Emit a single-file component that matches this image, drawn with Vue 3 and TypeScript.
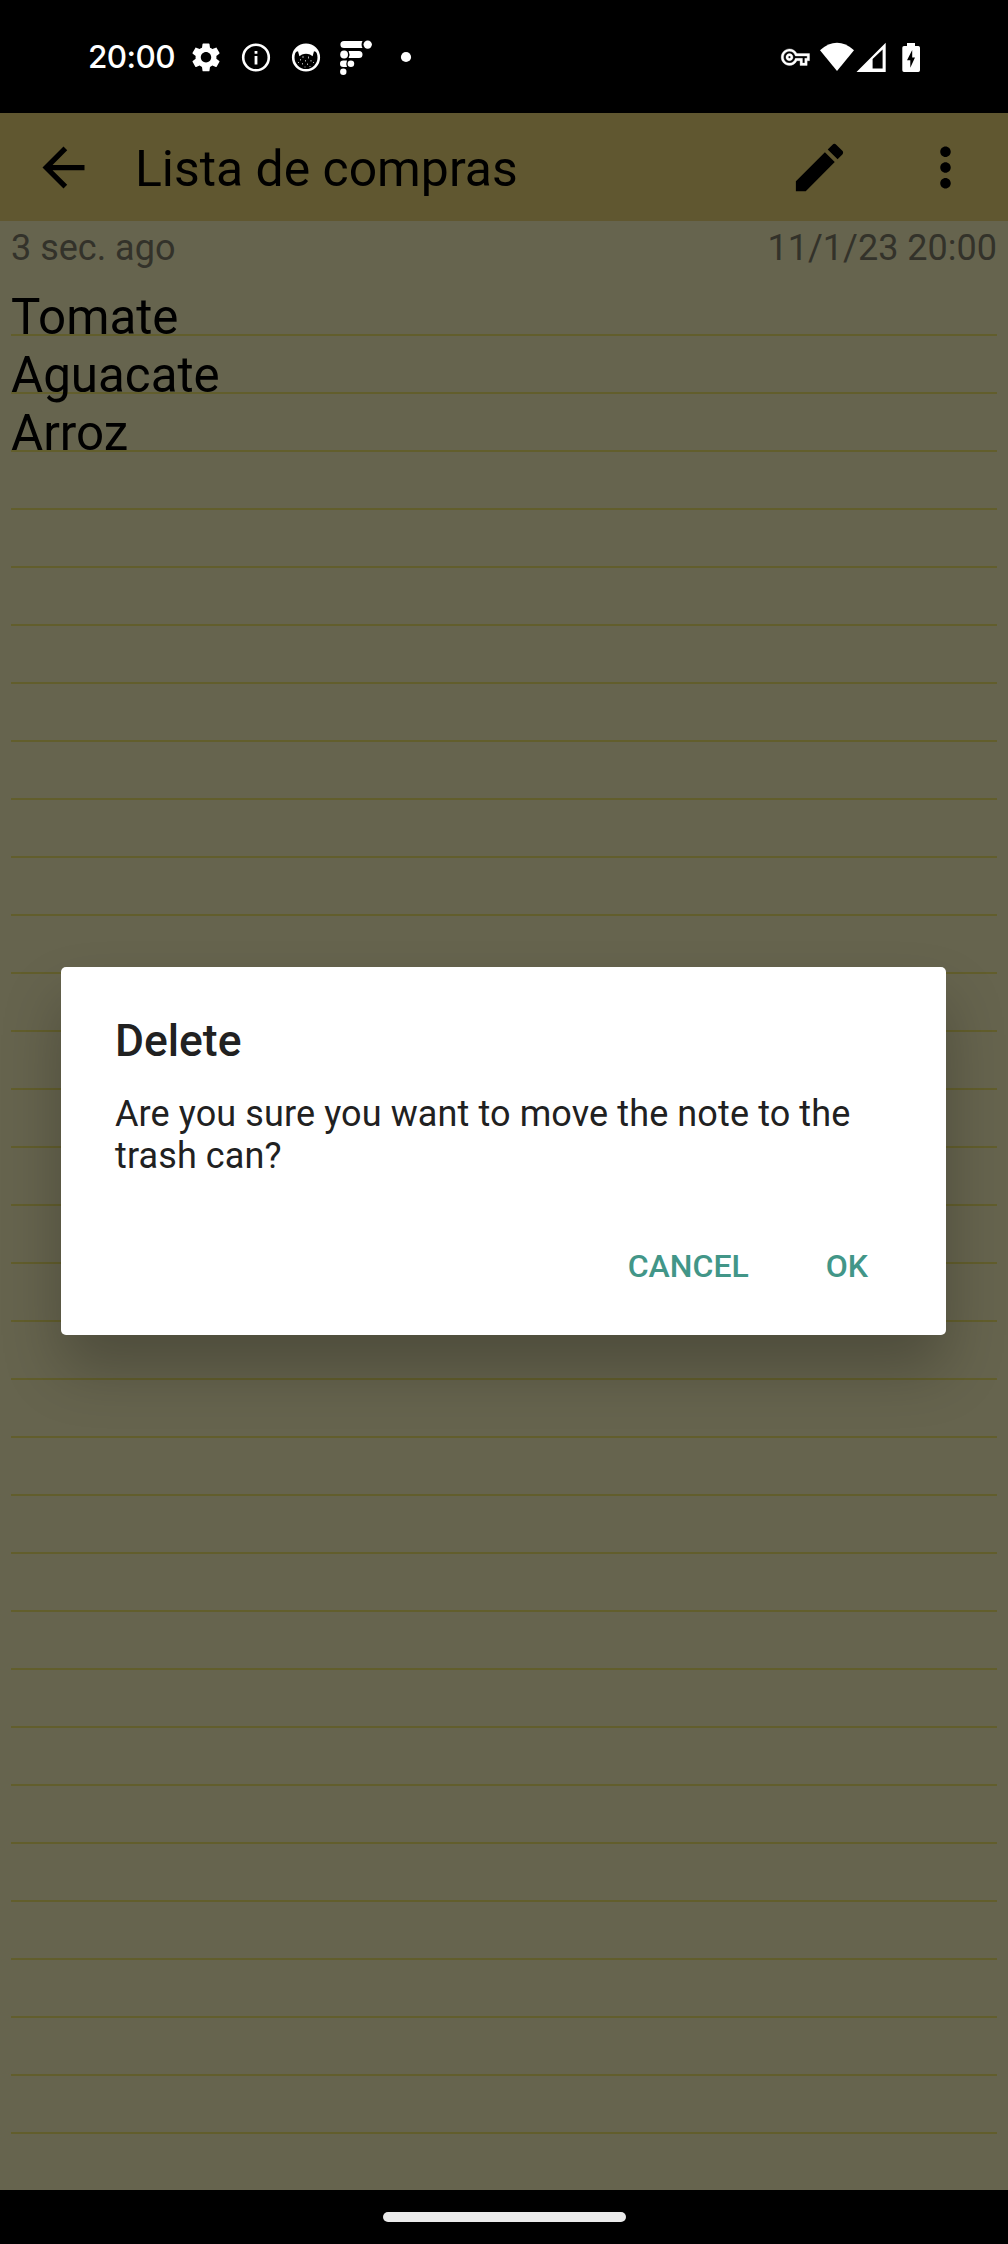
<script setup lang="ts">
const noteLines: string[] = ['Tomate', 'Aguacate', 'Arroz']
const ruleCount = 32
</script>

<template>
  <div class="screen">
    <header class="status">
      <span class="clock">20:00</span>
      <div class="notifications">
        <svg width="36" height="36" viewBox="0 0 36 36">
          <path transform="translate(.6 .9) scale(1.45)" fill="#fff" d="M19.14 12.94c.04-.3.06-.61.06-.94 0-.32-.02-.64-.07-.94l2.03-1.58c.18-.14.23-.41.12-.61l-1.92-3.32c-.12-.22-.37-.29-.59-.22l-2.39.96c-.5-.38-1.03-.7-1.62-.94l-.36-2.54c-.04-.24-.24-.41-.48-.41h-3.84c-.24 0-.43.17-.47.41l-.36 2.54c-.59.24-1.13.57-1.62.94l-2.39-.96c-.22-.08-.47 0-.59.22L2.74 8.87c-.12.21-.08.47.12.61l2.03 1.58c-.05.3-.09.63-.09.94s.02.64.07.94l-2.03 1.58c-.18.14-.23.41-.12.61l1.92 3.32c.12.22.37.29.59.22l2.39-.96c.5.38 1.03.7 1.62.94l.36 2.54c.05.24.24.41.48.41h3.84c.24 0 .44-.17.47-.41l.36-2.54c.59-.24 1.13-.56 1.62-.94l2.39.96c.22.08.47 0 .59-.22l1.92-3.32c.12-.22.07-.47-.12-.61l-2.01-1.58zM12 15.6c-1.98 0-3.6-1.62-3.6-3.6s1.62-3.6 3.6-3.6 3.6 1.62 3.6 3.6-1.62 3.6-3.6 3.6z" />
        </svg>
        <svg width="36" height="36" viewBox="0 0 36 36">
          <circle cx="18" cy="18.5" r="12.8" fill="none" stroke="#fff" stroke-width="2.6" />
          <path d="M16.6 12h2.8v2.8h-2.8zM16.6 17h2.8v8.4h-2.8z" fill="#fff" />
        </svg>
        <svg width="36" height="36" viewBox="0 0 36 36">
          <circle cx="18" cy="18.5" r="12.8" fill="none" stroke="#fff" stroke-width="2.6" />
          <path d="M6 16C7 9 11 5.500 18 5.500S29 9 30 16L28.400 13L26 12.300L24.600 17.200L22 15.500Q18 14 14 15.500L11.400 17.200L10 12.300L7.600 13z" fill="#fff" />
          <path d="M15 17v2M20.500 17.500v2M12.500 20v1.500M17.500 21v1.500M23 21v1.500M10.500 23v1M14.500 24v1.500M19.500 24.500v1.500M25.500 23v1M17 27.500v1M22 27v1" stroke="#aaa" stroke-width="1" />
        </svg>
        <svg width="36" height="36" viewBox="0 0 36 36" fill="#fff">
          <path d="M6 1.900H24.500Q22.600 5.500 24.500 9.100H6A3.600 3.600 0 0 1 6 1.900z" />
          <circle cx="29.700" cy="5.600" r="4.200" />
          <circle cx="6.100" cy="15.500" r="3.900" />
          <path d="M10.600 12H21A3.500 3.500 0 0 1 21 19H10.600Q12.400 15.500 10.600 12z" />
          <path d="M5.300 21.400H9Q7.600 24.700 9 28H5.300A3.300 3.300 0 0 1 5.300 21.400z" />
          <circle cx="12.900" cy="24.700" r="3.300" />
          <circle cx="5.300" cy="32.700" r="3.200" />
        </svg>
        <svg width="36" height="36" viewBox="0 0 36 36">
          <circle cx="18" cy="18" r="5.100" fill="#fff" />
        </svg>
      </div>
      <div class="system">
        <svg class="key" width="36" height="36" viewBox="0 0 36 36">
          <path transform="translate(3.200 4) scale(1.180)" fill="#fff" stroke="#fff" stroke-width=".3" d="M22 19h-6v-4h-2.680c-1.140 2.420-3.600 4-6.320 4-3.860 0-7-3.140-7-7s3.140-7 7-7c2.720 0 5.170 1.580 6.320 4H24v6h-2v4zm-4-2h2v-4h2v-2H11.940l-.23-.67C11.010 8.340 9.110 7 7 7c-2.760 0-5 2.240-5 5s2.240 5 5 5c2.110 0 4.010-1.340 4.710-3.330l.23-.67H18v4zM7 15c-1.650 0-3-1.350-3-3s1.350-3 3-3 3 1.350 3 3-1.350 3-3 3zm0-4c-.55 0-1 .45-1 1s.45 1 1 1 1-.45 1-1-.45-1-1-1z" />
        </svg>
        <svg width="36" height="36" viewBox="0 0 36 36">
          <path d="M1 11.200Q18 -3.600 35 11.200L18 32z" fill="#fff" />
        </svg>
        <svg width="32" height="36" viewBox="0 0 32 36">
          <path d="M1.500 33H30.700V3.700zM17.600 29.600V20L27.600 10.500V29.600z" fill="#fff" fill-rule="evenodd" />
        </svg>
        <svg class="battery" width="24" height="36" viewBox="0 0 24 36">
          <path d="M8 4h8v3h3.300q1.700 0 1.700 1.700v22.600q0 1.700-1.700 1.700H5q-1.700 0-1.700-1.700V8.700Q3.300 7 5 7h3z" fill="#fff" />
          <path d="M13.200 11L8 21.300h3.300v7.500L16 18.400h-2.800z" fill="#000" />
        </svg>
      </div>
    </header>

    <nav class="toolbar">
      <svg class="back" width="63" height="63" viewBox="0 0 24 24">
        <path d="M20 11H7.830l5.590-5.590L12 4l-8 8 8 8 1.410-1.410L7.830 13H20v-2z" />
      </svg>
      <h1 class="title">Lista de compras</h1>
      <svg class="edit" width="63" height="63" viewBox="0 0 24 24">
        <path d="M3 17.250V21h3.750L17.810 9.940l-3.750-3.750L3 17.250zM20.710 7.040c.39-.39.39-1.020 0-1.410l-2.340-2.340c-.39-.39-1.020-.39-1.410 0l-1.830 1.830 3.750 3.750 1.830-1.830z" />
      </svg>
      <svg class="more" width="63" height="63" viewBox="0 0 24 24">
        <path d="M12 8c1.100 0 2-.9 2-2s-.9-2-2-2-2 .9-2 2 .9 2 2 2zm0 2c-1.100 0-2 .9-2 2s.9 2 2 2 2-.9 2-2-.9-2-2-2zm0 6c-1.100 0-2 .9-2 2s.9 2 2 2 2-.9 2-2-.9-2-2-2z" />
      </svg>
    </nav>

    <main class="note">
      <div class="meta">
        <span class="ago">3 sec. ago</span>
        <span class="date">11/1/23 20:00</span>
      </div>
      <div class="paper">
        <div v-for="n in ruleCount" :key="n" class="rule"><span class="entry">{{ noteLines[n - 1] }}</span></div>
      </div>
    </main>

    <footer class="navbar"><div class="handle"></div></footer>

    <section class="dialog" role="dialog">
      <h2 class="dialog-title">Delete</h2>
      <p class="message">Are you sure you want to move the note to the<br />trash can?</p>
      <div class="actions">
        <button class="cancel" type="button">CANCEL</button>
        <button class="ok" type="button">OK</button>
      </div>
    </section>
  </div>
</template>

<style>
body {
  margin: 0;
  background: #000;
}
</style>

<style scoped>
.screen {
  position: relative;
  width: 1008px;
  height: 2244px;
  overflow: hidden;
  display: flex;
  flex-direction: column;
  background: #66644e;
  color: #000;
  font-family: Roboto, sans-serif;
}
svg {
  display: block;
  flex: none;
}
h1, h2, p {
  margin: 0;
  font-weight: 400;
  white-space: nowrap;
}
.status {
  box-sizing: border-box;
  height: 113px;
  padding: 39px 85px 0 88px;
  display: flex;
  background: #000;
}
.clock {
  width: 100px;
  height: 36px;
  color: #fff;
  font: 500 31.5px/36px Inter, sans-serif;
  letter-spacing: -.6px;
}
.notifications {
  display: flex;
  gap: 14px;
}
.system {
  display: flex;
  margin-left: auto;
}
.key {
  margin-right: 5px;
}
.battery {
  margin-left: 12px;
}
.toolbar {
  box-sizing: border-box;
  height: 108px;
  padding: 0 31px 0 32px;
  display: flex;
  align-items: center;
  background: #605730;
}
.title {
  margin-left: 40px;
  padding-top: 4px;
  font-size: 49.9px;
  line-height: 58px;
}
.edit {
  margin-left: auto;
}
.more {
  margin-left: 63px;
}
.note {
  height: 1969px;
  padding: 0 11px;
}
.meta {
  height: 57px;
  display: flex;
  justify-content: space-between;
  color: #33322a;
  font-size: 36px;
  line-height: 54px;
}
.rule {
  box-sizing: border-box;
  height: 58px;
  border-bottom: 2px solid #625e2c;
}
.entry {
  display: block;
  padding-top: 10px;
  font-size: 49.3px;
  line-height: 58px;
  white-space: nowrap;
}
.navbar {
  flex: 1;
  display: flex;
  justify-content: center;
  background: #000;
}
.handle {
  width: 243px;
  height: 10px;
  margin-top: 22px;
  border-radius: 5px;
  background: #ebebeb;
}
.dialog {
  position: absolute;
  left: 61px;
  top: 967px;
  box-sizing: border-box;
  width: 885px;
  height: 368px;
  padding: 48px 54px 0;
  border-radius: 5px;
  background: #fff;
  color: #212121;
  box-shadow: 0 34px 60px rgba(0, 0, 0, .24);
}
.dialog-title {
  font-size: 44.4px;
  font-weight: 500;
  line-height: 53px;
}
.message {
  margin-top: 25px;
  font-size: 36px;
  line-height: 42px;
  letter-spacing: .11px;
}
.actions {
  display: flex;
  justify-content: flex-end;
  margin-top: 61px;
}
.actions button {
  padding: 0;
  border: 0;
  background: none;
  color: #429688;
  font: 500 32px/56px Roboto, sans-serif;
}
.ok {
  margin: 0 24px 0 77px;
}
</style>
